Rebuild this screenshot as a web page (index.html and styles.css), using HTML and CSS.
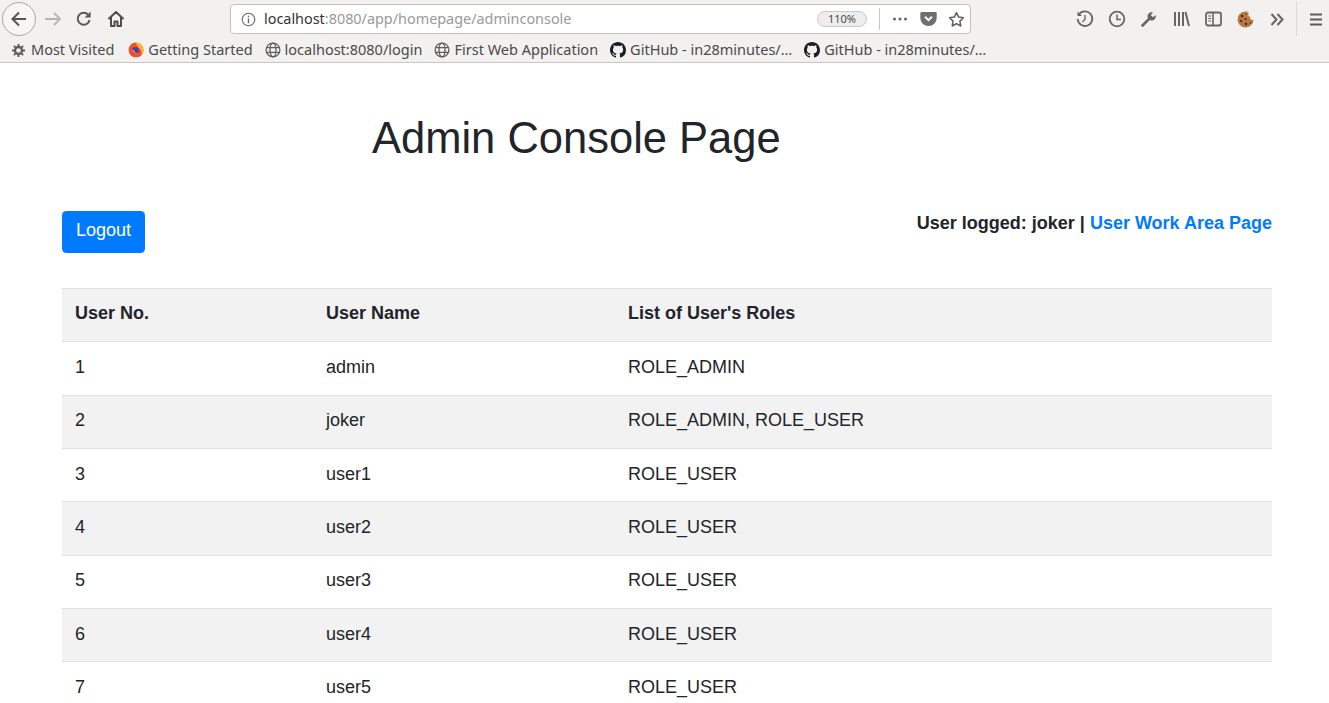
FILE: index.html
```html
<!DOCTYPE html>
<html lang="en">
<head>
  <meta charset="UTF-8">
  <meta name="viewport" content="width=device-width, initial-scale=1.0">
  <title>Admin Console Page</title>
  <link rel="stylesheet" href="styles.css">
</head>
<body>
  <svg class="sprites" width="0" height="0">
    <symbol id="globe" viewBox="0 0 16 16">
      <g fill="none" stroke="#5f5f5f" stroke-width="1.3">
        <circle cx="8" cy="8" r="6.9"/>
        <ellipse cx="8" cy="8" rx="3" ry="6.9"/>
        <path d="M1.5 5.6h13M1.5 10.4h13"/>
      </g>
    </symbol>
    <symbol id="github" viewBox="0 0 16 16">
      <path fill="#1b1f23" d="M8 0C3.58 0 0 3.58 0 8c0 3.54 2.29 6.53 5.47 7.59.4.07.55-.17.55-.38 0-.19-.01-.82-.01-1.49-2.01.37-2.53-.49-2.69-.94-.09-.23-.48-.94-.82-1.13-.28-.15-.68-.52-.01-.53.63-.01 1.08.58 1.23.82.72 1.21 1.87.87 2.33.66.07-.52.28-.87.51-1.07-1.78-.2-3.64-.89-3.64-3.95 0-.87.31-1.59.82-2.15-.08-.2-.36-1.02.08-2.12 0 0 .67-.21 2.2.82.64-.18 1.32-.27 2-.27s1.36.09 2 .27c1.53-1.04 2.2-.82 2.2-.82.44 1.1.16 1.92.08 2.12.51.56.82 1.27.82 2.15 0 3.07-1.87 3.75-3.65 3.95.29.25.54.73.54 1.48 0 1.07-.01 1.93-.01 2.2 0 .21.15.46.55.38A8.01 8.01 0 0 0 16 8c0-4.42-3.58-8-8-8z"/>
    </symbol>
  </svg>

  <header class="browser">
    <div class="nav-row">
      <button class="back" aria-label="Back">
        <svg width="20" height="20" viewBox="0 0 20 20"><path d="M17 10H4M10 3.5 3.5 10l6.5 6.5" fill="none" stroke="#555" stroke-width="2"/></svg>
      </button>
      <svg class="tool forward" width="18" height="18" viewBox="0 0 18 18"><path d="M1 9h15M10 3l6 6-6 6" fill="none" stroke="#b5b5b5" stroke-width="1.8"/></svg>
      <svg class="tool reload" width="18" height="18" viewBox="0 0 18 18"><path d="M14.6 10a6 6 0 1 1-1.3-5.2" fill="none" stroke="#5a5a5a" stroke-width="2"/><path d="M15.6 1.6v6h-6z" fill="#5a5a5a"/></svg>
      <svg class="tool home" width="18" height="18" viewBox="0 0 18 18"><path d="M1.5 9 9 2l7.5 7M4 7.5V16h3.5v-4.5h3V16H14V7.5" fill="none" stroke="#4e4e4e" stroke-width="2" stroke-linejoin="round"/></svg>

      <div class="urlbar">
        <svg class="info" width="15" height="15" viewBox="0 0 16 16"><circle cx="8" cy="8" r="6.7" fill="none" stroke="#6b6b6b" stroke-width="1.2"/><path d="M8 7v5M8 4v1.6" stroke="#6b6b6b" stroke-width="1.5"/></svg>
        <span class="url"><span class="host">localhost</span>:8080/app/homepage/adminconsole</span>
        <span class="zoom-level">110%</span>
        <span class="url-sep"></span>
        <svg class="more" width="16" height="16" viewBox="0 0 16 16"><g fill="#6a6a6a"><circle cx="2.5" cy="8" r="1.6"/><circle cx="8" cy="8" r="1.6"/><circle cx="13.5" cy="8" r="1.6"/></g></svg>
        <svg class="pocket" width="17" height="16" viewBox="0 0 17 16"><path d="M1.5 1h14A1.2 1.2 0 0 1 16.7 2.2V7a8.2 8 0 0 1-16.400 0V2.200A1.200 1.200 0 0 1 1.500 1z" fill="#6f6f6f"/><path d="m5 5.800 3.500 3.400L12 5.800" fill="none" stroke="#fff" stroke-width="2"/></svg>
        <svg class="star" width="17" height="17" viewBox="0 0 17 17"><path d="m8.500 1.600 2.100 4.500 4.900.6-3.600 3.400.9 4.900-4.300-2.400-4.300 2.400.9-4.900L1.500 6.700l4.900-.6z" fill="none" stroke="#5f5f5f" stroke-width="1.500" stroke-linejoin="round"/></svg>
      </div>

      <div class="tools-right">
        <span class="tool-cell"><svg width="18" height="18" viewBox="0 0 18 18"><path d="M2.800 4.800A7.300 7.300 0 1 1 1.700 9" fill="none" stroke="#666" stroke-width="1.800"/><path d="M1.500 1.500V6h4.500z" fill="#666"/><path d="M9 5v4.300L6.500 12" fill="none" stroke="#666" stroke-width="1.300"/></svg></span>
        <span class="tool-cell"><svg width="18" height="18" viewBox="0 0 18 18"><circle cx="9" cy="9" r="7.300" fill="none" stroke="#666" stroke-width="1.800"/><path d="M9 4.500V9.500h4" fill="none" stroke="#666" stroke-width="1.500"/></svg></span>
        <span class="tool-cell"><svg width="16" height="16" viewBox="0 0 16 16"><path d="M1.500 14.500 8 8" stroke="#666" stroke-width="2.600" stroke-linecap="round"/><path d="M7 7a4 4 0 0 1 5-5.500L9.800 4l2.200 2.200L14.600 4A4 4 0 0 1 9 9z" fill="#666"/></svg></span>
        <span class="tool-cell"><svg width="17" height="16" viewBox="0 0 17 16"><path d="M2 1v14M6 1v14M10 1v14" stroke="#666" stroke-width="2"/><path d="m12.500 1 3.500 14" stroke="#666" stroke-width="2"/></svg></span>
        <span class="tool-cell"><svg width="17" height="16" viewBox="0 0 17 16"><rect x="1" y="1.500" width="15" height="13" rx="2" fill="none" stroke="#666" stroke-width="1.800"/><path d="M8 1.500v13" stroke="#666" stroke-width="1.600"/><path d="M3.200 5h3M3.200 7.500h3M3.200 10h3" stroke="#666" stroke-width="1.100"/></svg></span>
        <span class="tool-cell"><svg width="17" height="17" viewBox="0 0 17 17"><path d="M8.500.5a8 8 0 1 0 8 8.500l-3-.5-.5-2.500-2-1.500.5-3A8 8 0 0 0 8.500.5z" fill="#b9763f"/><path d="M9 .5c1 0 2 .2 2.500.5l-.5 3 2 1.500-1.500 1C10 5 9 3 9 .5z" fill="#d8945d"/><g fill="#3d2416"><circle cx="5" cy="5" r="1.200"/><circle cx="4" cy="10" r="1.100"/><circle cx="8.500" cy="8" r="1"/><circle cx="9" cy="13" r="1.200"/><circle cx="9.500" cy="3" r=".8"/><circle cx="13.500" cy="12" r=".8"/></g></svg></span>
        <span class="tool-cell"><svg width="14" height="13" viewBox="0 0 14 13"><path d="m1.500 1 5 5.500-5 5.500M7.500 1l5 5.500-5 5.500" fill="none" stroke="#666" stroke-width="2"/></svg></span>
      </div>
      <span class="tool-sep"></span>
      <svg class="menu" width="14" height="13" viewBox="0 0 14 13"><path d="M1 1.500h12M1 6.500h12M1 11.500h12" stroke="#5c5c5c" stroke-width="2"/></svg>
    </div>

    <nav class="bookmarks">
      <a class="bookmark bookmark-first">
        <svg class="gear" width="13" height="13" viewBox="0 0 16 16"><circle cx="8" cy="8" r="4.300" fill="none" stroke="#5f5f5f" stroke-width="2.800"/><path d="M8 0v3M8 13v3M0 8h3M13 8h3M2.300 2.300l2.100 2.100M11.600 11.600l2.100 2.100M2.300 13.700l2.100-2.100M11.600 4.400l2.100-2.100" stroke="#5f5f5f" stroke-width="2.400"/></svg>
        Most Visited
      </a>
      <a class="bookmark">
        <svg width="16" height="16" viewBox="0 0 16 16"><circle cx="8" cy="8" r="7.500" fill="#f0502a"/><path d="M8 .5a7.500 7.500 0 0 1 7.500 7.500c0 2-1 4-2 5 .8-3-.3-6-3-7.500C9.500 4 8 2.500 8 .5z" fill="#fdb927"/><circle cx="7.500" cy="8.500" r="3.400" fill="#4a3fb0"/><path d="M4 8a4 4 0 0 0 7 2.500C9.500 12 6.500 11 6 8z" fill="#f9832c"/></svg>
        Getting Started
      </a>
      <a class="bookmark"><svg width="16" height="16"><use href="#globe"/></svg>localhost:8080/login</a>
      <a class="bookmark"><svg width="16" height="16"><use href="#globe"/></svg>First Web Application</a>
      <a class="bookmark"><svg width="16" height="16"><use href="#github"/></svg>GitHub - in28minutes/…</a>
      <a class="bookmark"><svg width="16" height="16"><use href="#github"/></svg>GitHub - in28minutes/…</a>
    </nav>
  </header>

  <main class="container">
    <h1>Admin Console Page</h1>

    <div class="actions">
      <a class="btn-logout" href="#">Logout</a>
      <p class="user-info">User logged: joker | <a href="#">User Work Area Page</a></p>
    </div>

    <table class="users">
      <thead>
        <tr><th class="col-no">User No.</th><th class="col-name">User Name</th><th>List of User's Roles</th></tr>
      </thead>
      <tbody>
        <tr><td>1</td><td>admin</td><td>ROLE_ADMIN</td></tr>
        <tr><td>2</td><td>joker</td><td>ROLE_ADMIN, ROLE_USER</td></tr>
        <tr><td>3</td><td>user1</td><td>ROLE_USER</td></tr>
        <tr><td>4</td><td>user2</td><td>ROLE_USER</td></tr>
        <tr><td>5</td><td>user3</td><td>ROLE_USER</td></tr>
        <tr><td>6</td><td>user4</td><td>ROLE_USER</td></tr>
        <tr><td>7</td><td>user5</td><td>ROLE_USER</td></tr>
      </tbody>
    </table>
  </main>
</body>
</html>
```

FILE: styles.css
```css
/* Reset */
* {
  margin: 0;
  padding: 0;
  box-sizing: border-box;
}

html,
body {
  height: 100%;
  overflow: hidden;
}

body {
  background: #fff;
  color: #212529;
  font-family: "Liberation Sans", Arial, sans-serif;
  font-size: 18px;
  line-height: 1.5;
}

.sprites {
  display: block;
}

/* Browser chrome */
.browser {
  height: 63px;
  background: #f2f1f0;
  border-bottom: 1px solid #c9c7c4;
  font-family: "Noto Sans", sans-serif;
}

.nav-row {
  display: flex;
  align-items: center;
  height: 38px;
  padding-left: 2px;
}

.back {
  display: flex;
  align-items: center;
  justify-content: center;
  width: 34px;
  height: 34px;
  border: 1px solid #a9a7a5;
  border-radius: 50%;
  background: #f7f6f5;
}

.tool {
  flex: none;
}

.forward {
  margin-left: 8px;
}

.reload {
  margin-left: 13px;
}

.home {
  margin-left: 14px;
}

.urlbar {
  display: flex;
  align-items: center;
  width: 741px;
  height: 30px;
  margin-left: 105px;
  padding: 0 5px 0 10px;
  background: #fff;
  border: 1px solid #c4c2bf;
  border-radius: 4px;
}

.url {
  flex: 1;
  margin-left: 8px;
  color: #999;
  font-size: 14.4px;
}

.host {
  color: #333;
}

.zoom-level {
  width: 50px;
  height: 16px;
  background: #ededed;
  border: 1px solid #c9c9c9;
  border-radius: 8px;
  color: #4a4a4a;
  font-size: 11px;
  line-height: 14px;
  text-align: center;
}

.url-sep {
  width: 1px;
  height: 22px;
  margin: 0 12px;
  background: #c9c7c4;
}

.pocket {
  margin-left: 12px;
}

.star {
  margin-left: 11px;
}

.tools-right {
  display: flex;
  align-items: center;
  margin-left: 98px;
}

.tool-cell {
  display: flex;
  align-items: center;
  justify-content: center;
  width: 32px;
}

.tool-sep {
  width: 1px;
  height: 34px;
  margin-left: 3px;
  background: #dcdad8;
}

.menu {
  margin-left: 12px;
}

.bookmarks {
  display: flex;
  align-items: center;
  gap: 12px;
  height: 24px;
  padding-left: 12px;
}

.bookmark {
  display: flex;
  align-items: center;
  gap: 4px;
  color: #4a4a4a;
  font-size: 14.5px;
  white-space: nowrap;
}

.bookmark-first {
  margin-right: 2px;
}

.gear {
  margin-right: 2px;
}

/* Page */
.container {
  padding: 0 57px 0 62px;
}

h1 {
  padding: 49px 0 0 310px;
  font-size: 43.5px;
  font-weight: 400;
  line-height: 1.2;
}

.actions {
  display: flex;
  align-items: flex-start;
  justify-content: space-between;
  margin-top: 47px;
}

.btn-logout {
  padding: 6px 14px 9px;
  background: #007bff;
  border-radius: 4.4px;
  color: #fff;
  text-decoration: none;
}

.user-info {
  font-weight: 700;
  line-height: 24px;
}

.user-info a {
  color: #007bff;
  text-decoration: none;
}

.users {
  width: 100%;
  margin-top: 35px;
  border-collapse: collapse;
}

.users th,
.users td {
  height: 53.3px;
  padding: 0 13px 2px;
  border-top: 1px solid #dee2e6;
  text-align: left;
  vertical-align: middle;
}

.users th {
  padding-bottom: 4px;
}

.users thead tr,
.users tbody tr:nth-child(even) {
  background: #f2f2f2;
}

.col-no {
  width: 251px;
}

.col-name {
  width: 302px;
}
```
